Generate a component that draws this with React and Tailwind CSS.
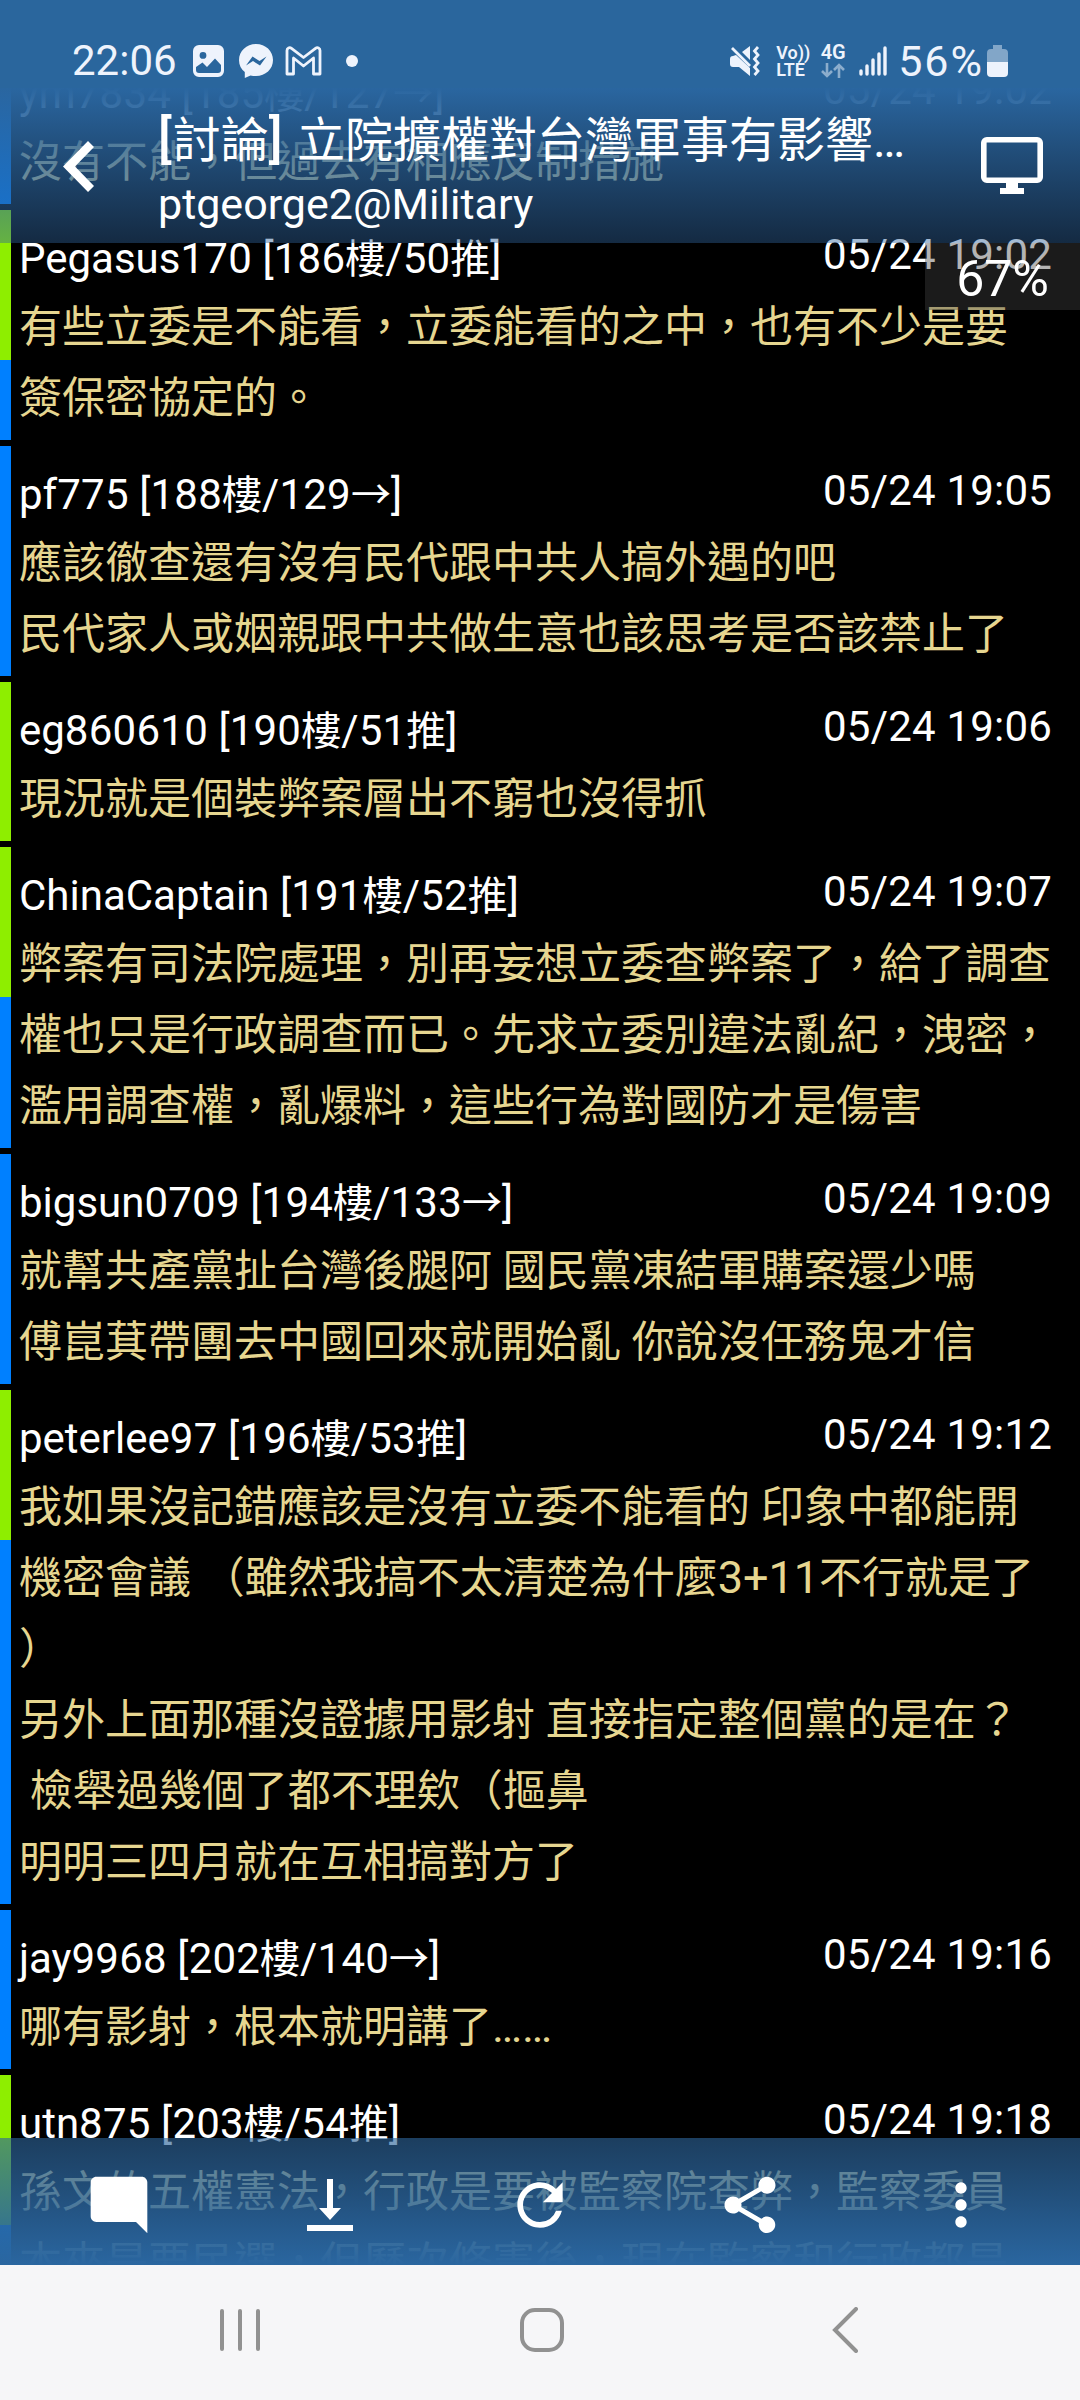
import React from 'react';
import clsx from 'clsx';
import { MdModeComment, MdMoreVert, MdRefresh, MdShare } from 'react-icons/md';

const comments = [
  { user: 'ym7834', floor: '[185樓/127→]', time: '05/24 19:02', type: 'arrow', lines: ['沒有不能，但過去有相應反制措施'] },
  { user: 'Pegasus170', floor: '[186樓/50推]', time: '05/24 19:02', type: 'push', lines: ['有些立委是不能看，立委能看的之中，也有不少是要', '簽保密協定的。'] },
  { user: 'pf775', floor: '[188樓/129→]', time: '05/24 19:05', type: 'arrow', lines: ['應該徹查還有沒有民代跟中共人搞外遇的吧', '民代家人或姻親跟中共做生意也該思考是否該禁止了'] },
  { user: 'eg860610', floor: '[190樓/51推]', time: '05/24 19:06', type: 'push', lines: ['現況就是個裝弊案層出不窮也沒得抓'] },
  { user: 'ChinaCaptain', floor: '[191樓/52推]', time: '05/24 19:07', type: 'push', lines: ['弊案有司法院處理，別再妄想立委查弊案了，給了調查', '權也只是行政調查而已。先求立委別違法亂紀，洩密，', '濫用調查權，亂爆料，這些行為對國防才是傷害'] },
  { user: 'bigsun0709', floor: '[194樓/133→]', time: '05/24 19:09', type: 'arrow', lines: ['就幫共產黨扯台灣後腿阿 國民黨凍結軍購案還少嗎', '傅崑萁帶團去中國回來就開始亂 你說沒任務鬼才信'] },
  { user: 'peterlee97', floor: '[196樓/53推]', time: '05/24 19:12', type: 'push', lines: ['我如果沒記錯應該是沒有立委不能看的 印象中都能開', '機密會議 （雖然我搞不太清楚為什麼3+11不行就是了', '）', '另外上面那種沒證據用影射 直接指定整個黨的是在？', ' 檢舉過幾個了都不理欸（摳鼻', '明明三四月就在互相搞對方了'] },
  { user: 'jay9968', floor: '[202樓/140→]', time: '05/24 19:16', type: 'arrow', lines: ['哪有影射，根本就明講了……'] },
  { user: 'utn875', floor: '[203樓/54推]', time: '05/24 19:18', type: 'push', lines: ['孫文的五權憲法，行政是要被監察院查弊，監察委員', '本來是要民選，但歷次修憲後，現在監察和行政都是'] },
];

// Wraps the runs that match `pattern` (one capture group) in a styled span
function Runs({ text, pattern, className }) {
  return text.split(pattern).map((part, i) =>
    i % 2 ? <span key={i} className={className}>{part}</span> : part
  );
}

function Comment({ user, floor, time, type, lines }) {
  return (
    <div className="flex shrink-0">
      <div className="flex w-[11px] shrink-0 flex-col bg-[#0080ff]">
        {type === 'push' && <div className={clsx(lines.length > 1 ? 'h-[150px]' : 'h-full', 'bg-[#8eee00]')} />}
      </div>
      <div className="flex-1 pr-[28px] pl-[8px]">
        <div className="flex h-[82px] items-start justify-between text-[42px] leading-[50px] text-white">
          <span className="pt-[24px]">
            <Runs text={user} pattern={/(\d+)/} className="tracking-[0.25px]" />{' '}
            <span className="tracking-[0.2px]">
              <Runs text={floor} pattern={/([樓推→])/} className="text-[40px] leading-none tracking-normal" />
            </span>
          </span>
          <span className="pt-[20px] tracking-[0.2px]">{time}</span>
        </div>
        <div className="pb-[6px] text-[43px] leading-[71px] whitespace-pre text-[#e6d690]">
          {lines.map((line, i) => (
            <p key={i} className="h-[71px]">
              <Runs text={line} pattern={/([\d+…]+)/} className="text-[45px] leading-none" />
            </p>
          ))}
        </div>
      </div>
    </div>
  );
}

function StatusBar() {
  return (
    <div className="flex h-[88px] items-center bg-[#2a669d] px-[72px] pt-[34px] text-[#eef3fc]">
      <div className="-mt-[1px] flex flex-1 items-center">
        <span className="w-[121px] text-[42px] leading-[48px]">22:06</span>
        <svg className="h-[32px] w-[31px]" viewBox="0 0 31 32">
          <path fill="currentColor" fillRule="evenodd" d="M6 0h19a6 6 0 0 1 6 6v20a6 6 0 0 1-6 6H6a6 6 0 0 1-6-6V6a6 6 0 0 1 6-6ZM10 7a3.400 3.400 0 1 0 0 6.800a3.400 3.400 0 0 0 0-6.800ZM3 22v3a3 3 0 0 0 3 3h19a3 3 0 0 0 3-3v-5l-6-6.500-8 8.500-4.500-4.500Z" />
        </svg>
        <svg className="ml-[15px] h-[34px] w-[34px]" viewBox="0 0 34 34">
          <path fill="currentColor" d="M17 0C7.500 0 0 7 0 16.200c0 5 2.200 9 5.800 11.900V34l5.700-2.600c1.700.5 3.600.7 5.500.7 9.500 0 17-6.800 17-16S26.500 0 17 0Z" />
          <path fill="#2a669d" d="m7 21.500 6.500-9 7 4.500 7-4.500-6.500 9-7-4.500Z" />
        </svg>
        <svg className="ml-[12px] h-[30px] w-[37px]" viewBox="0 0 37 30">
          <path fill="none" stroke="currentColor" strokeWidth="2.800" strokeLinejoin="round" d="M2 28V4.500C2 2 4.500.8 6.500 2.300l12 9.200 12-9.200C32.500.8 35 2 35 4.500V28h-6.500V12l-10 8-10-8v16Z" />
        </svg>
        <span className="ml-[24px] size-[12px] rounded-full bg-current" />
      </div>
      <div className="-mt-[1px] flex items-center">
        <svg className="h-[30px] w-[30px]" viewBox="0 0 30 30">
          <path fill="currentColor" d="M0 13a3 3 0 0 1 3-3l3-1 14 13v8L9 21H3a3 3 0 0 1-3-3ZM12 6l8-6v14Z" />
          <path fill="none" stroke="currentColor" strokeWidth="2.800" d="m2 2 18 18M28 1l-3.500 4 3.500 4-3.500 4 3.500 4-3.500 4 3.500 4-3.500 4" />
        </svg>
        <div className="ml-[16px] flex w-[32px] flex-col text-[18px] leading-[17px] font-semibold">
          <span className="whitespace-nowrap">Vo))</span>
          <span>LTE</span>
        </div>
        <div className="ml-[12px] flex w-[26px] flex-col items-center text-[20px] leading-[17px] font-semibold">
          <span>4G</span>
          <svg className="mt-[2px] h-[15px] w-[24px] opacity-50" viewBox="0 0 24 15" fill="none" stroke="currentColor" strokeWidth="2.600">
            <path d="M6 0v13M1 8l5 5 5-5M18 15V2M13 7l5-5 5 5" />
          </svg>
        </div>
        <svg className="ml-[13px] h-[30px] w-[28px]" viewBox="0 0 28 30" stroke="currentColor" strokeWidth="3.400" strokeLinecap="round">
          <path d="M2 25v3M8 20v8M14 14v14M20 8v20M26 2v26" />
        </svg>
        <span className="ml-[11px] text-[43px] leading-[48px] tracking-[2px]">56%</span>
        <svg className="ml-[3px] h-[32px] w-[21px]" viewBox="0 0 21 32" fill="currentColor">
          <path opacity=".45" d="M6 0h9v4h2a4 4 0 0 1 4 4v9H0V8a4 4 0 0 1 4-4h2Z" />
          <path d="M0 17h21v11a4 4 0 0 1-4 4H4a4 4 0 0 1-4-4Z" />
        </svg>
      </div>
    </div>
  );
}

function Header() {
  return (
    <header className="absolute inset-x-0 top-0 z-20 flex flex-col">
      <StatusBar />
      <div className="flex h-[155px] items-center bg-linear-to-b from-[#2a66a0] to-[#2f629a]/43 text-white">
        <svg className="ml-[60px] h-[54px] w-[36px]" viewBox="0 0 36 54">
          <path fill="currentColor" d="M28 2 3 27.500 28 53l6-6-19-19.500L34 8Z" />
        </svg>
        <div className="ml-[62px] flex-1 pt-[13px]">
          <h1 className="text-[48px] leading-[64px] font-normal whitespace-nowrap">
            <Runs text="[討論] 立院擴權對台灣軍事有影響…" pattern={/([[\] ]+)/} className="text-[51px] leading-none font-medium tracking-[0.9px]" />
          </h1>
          <p className="text-[43px] leading-[62px]">ptgeorge2@Military</p>
        </div>
        <svg className="mr-[37px] h-[58px] w-[62px]" viewBox="0 0 62 58">
          <rect x="2.800" y="2.800" width="56.400" height="40.400" rx="3" fill="none" stroke="currentColor" strokeWidth="5.600" />
          <path fill="currentColor" d="M25 45h12v6h6v6H19v-6h6Z" />
        </svg>
      </div>
    </header>
  );
}

function Toolbar() {
  return (
    <div className="absolute inset-x-0 bottom-0 z-20 grid h-[127px] grid-cols-5 place-items-center bg-linear-to-b from-[#2d6499]/62 to-[#2a66a0] px-[14px] pt-[7px] text-[68px] text-white">
      <MdModeComment />
      <svg className="size-[68px]" viewBox="0 0 68 68" fill="currentColor">
        <path d="M31 8h6v29h8L34 49 23 37h8ZM11 54h46v6H11Z" />
      </svg>
      <MdRefresh />
      <MdShare />
      <MdMoreVert />
    </div>
  );
}

function NavBar() {
  return (
    <nav className="flex h-[135px] items-center bg-[#f6f6f8] pb-[5px] text-[#919191]">
      <svg className="ml-[218px] h-[46px] w-[44px]" viewBox="0 0 44 46" stroke="currentColor" strokeWidth="4" strokeLinecap="round">
        <path d="M4 4v38M22 4v38M40 4v38" />
      </svg>
      <svg className="ml-[257px] h-[46px] w-[46px]" viewBox="0 0 46 46" fill="none" stroke="currentColor" strokeWidth="4">
        <rect x="3" y="3" width="40" height="40" rx="13" />
      </svg>
      <svg className="ml-[266px] h-[46px] w-[28px]" viewBox="0 0 28 46" fill="none" stroke="currentColor" strokeWidth="4" strokeLinecap="round">
        <path d="M25 2 4 23l21 21" />
      </svg>
    </nav>
  );
}

export default function App() {
  return (
    <div className="flex h-[2400px] w-[1080px] flex-col overflow-hidden bg-black font-[Roboto,'Noto_Sans_CJK_TC',sans-serif]">
      <main className="relative h-[2265px] overflow-hidden">
        <div className="flex flex-col gap-[6px] pt-[45px]">
          {comments.map((c) => (
            <Comment key={c.floor} {...c} />
          ))}
        </div>
        <div className="absolute top-[243px] right-0 z-10 flex h-[67px] w-[155px] items-center justify-end bg-[#434343]/40 pt-[5px] pr-[31px] text-[50px] leading-none text-white">
          67%
        </div>
        <Header />
        <Toolbar />
      </main>
      <NavBar />
    </div>
  );
}
